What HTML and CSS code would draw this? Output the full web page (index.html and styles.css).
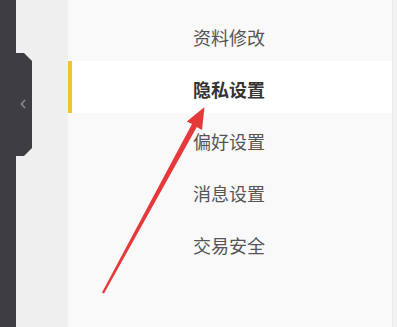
FILE: index.html
```html
<!DOCTYPE html>
<html lang="zh">
<head>
<meta charset="utf-8">
<link rel="stylesheet" href="styles.css">
</head>
<body>
<div class="page">
  <div class="rail">
    <div class="handle">
      <svg class="chev" width="6" height="10" viewBox="0 0 6 10"><path d="M5 1 L1.5 5 L5 9" fill="none" stroke="#8a8a8e" stroke-width="1.6"/></svg>
    </div>
  </div>
  <div class="gutter"></div>
  <ul class="menu">
    <li class="item">资料修改</li>
    <li class="item active">隐私设置</li>
    <li class="item">偏好设置</li>
    <li class="item">消息设置</li>
    <li class="item">交易安全</li>
  </ul>
  <div class="edge"></div>
  <svg class="arrow" width="397" height="327" viewBox="0 0 397 327">
    <polygon points="204.5,107 202,130 196.8,127 104,293.5 102,292.5 192,124 186.8,121.5" fill="#e5393a"/>
  </svg>
</div>
</body>
</html>
```
FILE: styles.css
```css
html, body {
  margin: 0;
  padding: 0;
  width: 397px;
  height: 327px;
  overflow: hidden;
  background: #f4f4f4;
}
.page {
  position: relative;
  display: flex;
  height: 327px;
  font-family: "Noto Sans CJK SC", "Microsoft YaHei", sans-serif;
}
.rail {
  position: relative;
  width: 16px;
  background: #3e3d42;
  flex: none;
}
.handle {
  position: absolute;
  left: 15px;
  top: 53px;
  width: 17px;
  height: 103px;
  background: #3e3d42;
  clip-path: polygon(0 0, 9px 0, 17px 8px, 17px 95px, 9px 103px, 0 103px);
  display: flex;
  align-items: center;
  justify-content: center;
}
.chev {
  display: block;
  margin-left: -2px;
  margin-top: -2px;
}
.gutter {
  width: 52px;
  flex: none;
  background: #efefef;
}
.menu {
  list-style: none;
  margin: 0;
  padding: 9px 0 0 0;
  width: 325px;
  flex: none;
  background: #f9f9f9;
  border-right: 1px solid #e9e9e9;
  box-sizing: border-box;
}
.item {
  height: 52px;
  display: flex;
  align-items: center;
  padding-left: 125px;
  padding-top: 4px;
  box-sizing: border-box;
  font-size: 18px;
  color: #555;
}
.item.active {
  background: #fff;
  font-weight: bold;
  color: #333;
  box-shadow: inset 4px 0 0 #f2c530;
}
.edge {
  flex: 1;
  background: #f4f4f4;
}
.arrow {
  position: absolute;
  left: 0;
  top: 0;
}
```
